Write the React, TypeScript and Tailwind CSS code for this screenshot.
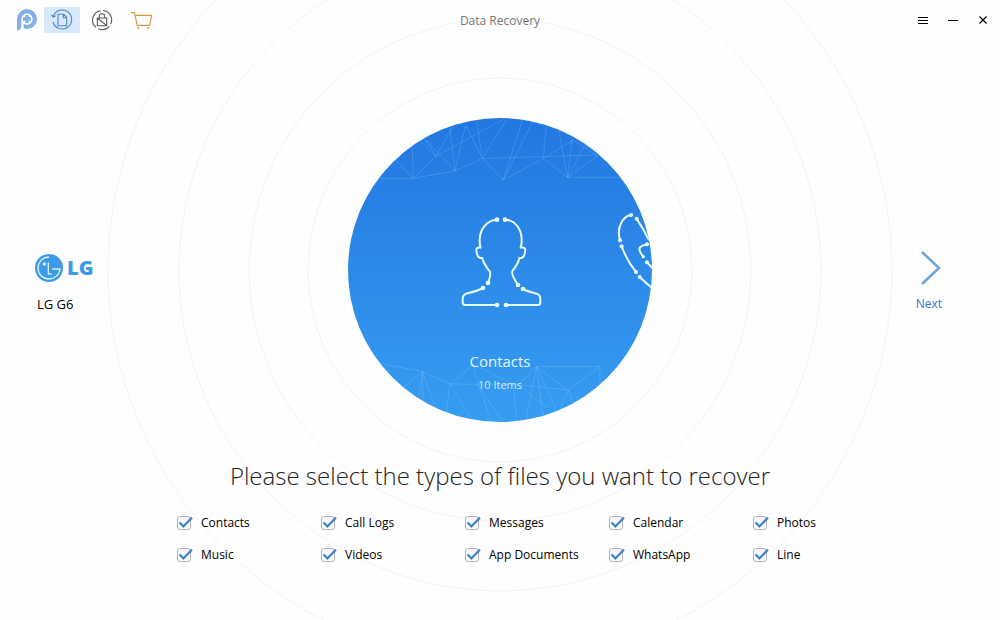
import { useState } from 'react'

const FILE_TYPES = [
  'Contacts',
  'Call Logs',
  'Messages',
  'Calendar',
  'Photos',
  'Music',
  'Videos',
  'App Documents',
  'WhatsApp',
  'Line',
]

const RING_RADII = [192, 251, 321, 392]

function AppLogo() {
  return (
    <svg width="22" height="22" viewBox="48 27 66 66" aria-hidden="true">
      <path fill="#84b0ea" d="M51 92V57a30 30 0 1 1 30 30q-5 0-10-2V71a17 17 0 1 0-7-14V79q0 11-13 13Z" />
      <path fill="#84b0ea" d="M76 45h10v7h7v10h-7v7H76v-7h-7V52h7Z" />
    </svg>
  )
}

function RecoverIcon() {
  return (
    <svg width="22" height="22" viewBox="153 27 66 66" fill="none" stroke="#4588cf" strokeWidth="3.2" aria-hidden="true">
      <path d="M160 48a28.500 28.500 0 1 1-1 18" />
      <path d="M154 45l6 6 7-4" />
      <path d="M174 43h17l9 9v25h-26ZM190 43v10h10" />
    </svg>
  )
}

function UnlockIcon() {
  return (
    <svg width="22" height="22" viewBox="273 27 66 66" fill="none" stroke="#555" strokeWidth="3.2" aria-hidden="true">
      <path d="M288 82a28.500 28.500 0 0 1 14-50M309 31.500a28.500 28.500 0 0 1 23 41M328 79a28.500 28.500 0 0 1-33 7" />
      <path d="M292 54h28v23h-28ZM298 54v-5a8 8 0 0 1 16 0v5M292 54l28 23" />
    </svg>
  )
}

function CartIcon() {
  return (
    <svg width="22" height="22" viewBox="393 27 66 66" fill="none" stroke="#dc9440" strokeWidth="3.4" aria-hidden="true">
      <path d="M393 38h10l9 38h37l6-30h-50" strokeLinejoin="round" />
      <circle cx="415" cy="84" r="3" fill="#dc9440" stroke="none" />
      <circle cx="445" cy="84" r="3" fill="#dc9440" stroke="none" />
    </svg>
  )
}

function TitleBar() {
  return (
    <header className="relative grid h-10 grid-cols-[1fr_auto_1fr] items-center">
      <div className="flex items-center pl-4">
        <AppLogo />
        <nav className="ml-[6px] flex gap-1">
          <button type="button" aria-label="Recover" className="flex h-[26px] w-9 items-center justify-center rounded-xs bg-[#d9e8fa]">
            <RecoverIcon />
          </button>
          <button type="button" aria-label="Unlock" className="flex h-[26px] w-9 items-center justify-center">
            <UnlockIcon />
          </button>
          <button type="button" aria-label="Buy" className="flex h-[26px] w-9 items-center justify-center">
            <CartIcon />
          </button>
        </nav>
      </div>
      <h1 className="pt-[2px] text-xs text-[#777]">Data Recovery</h1>
      <div className="flex justify-end pr-[2px] text-black">
        <button type="button" aria-label="Menu" className="flex h-6 w-[30px] items-center justify-center">
          <svg width="10" height="7" viewBox="0 0 10 7" fill="currentColor" shapeRendering="crispEdges">
            <path d="M0 0h10v1H0ZM0 3h10v1H0ZM0 6h10v1H0Z" />
          </svg>
        </button>
        <button type="button" aria-label="Minimize" className="flex h-6 w-[30px] items-center justify-center">
          <svg width="10" height="2" viewBox="0 0 10 2" fill="currentColor" shapeRendering="crispEdges">
            <path d="M0 1h10v1H0Z" />
          </svg>
        </button>
        <button type="button" aria-label="Close" className="flex h-6 w-[30px] items-center justify-center">
          <svg width="8" height="8" viewBox="0 0 8 8" fill="none" stroke="currentColor" strokeWidth="1.300">
            <path d="M0.500 0.500l7 7M7.500 0.500l-7 7" />
          </svg>
        </button>
      </div>
    </header>
  )
}

function Rings() {
  return (
    <svg
      className="pointer-events-none absolute top-1/2 left-1/2 -translate-x-1/2 -translate-y-1/2"
      width="800"
      height="800"
      viewBox="-400 -400 800 800"
      fill="none"
      stroke="#f3f3f3"
      aria-hidden="true"
    >
      {RING_RADII.map(r => (
        <circle key={r} r={r} />
      ))}
    </svg>
  )
}

function DiscArt() {
  return (
    <svg className="absolute inset-0" width="304" height="304" viewBox="0 0 304 304" fill="none" aria-hidden="true">
      <defs>
        <linearGradient id="disc-fill" x1="0" y1="0" x2="0" y2="1">
          <stop offset="0" stopColor="#2277e0" />
          <stop offset="1" stopColor="#369df1" />
        </linearGradient>
        <clipPath id="disc-clip">
          <circle cx="152" cy="152" r="152" />
        </clipPath>
      </defs>
      <circle cx="152" cy="152" r="152" fill="url(#disc-fill)" />
      <g clipPath="url(#disc-clip)">
        {/* mesh along the top edge */}
        <g transform="translate(-3 -3) scale(0.33333)" stroke="#8ccbff" strokeOpacity="0.250" strokeWidth="3">
          <path d="M90 190H205L330 168L412 130L595 125L755 120M668 187H830M412 130L475 195L595 130L668 187" />
          <path d="M150 132L205 190L202 100M205 190L272 124L480 10M225 78L272 124L242 75M242 75L330 168L315 40M272 124L335 15" />
          <path d="M330 168L362 30L412 130L395 15M412 130L490 5M475 195L532 15M475 195L565 15M595 130L605 20M595 130L685 75" />
          <path d="M668 187L640 40M668 187L682 70M668 187L725 80M668 187L760 120M685 75L760 125" />
        </g>
        {/* mesh along the bottom edge */}
        <g transform="translate(-3 222) scale(0.33333)" stroke="#a5d8ff" strokeOpacity="0.220" strokeWidth="3">
          <path d="M90 68L232 94L315 132L520 134L670 150L765 80H575L520 134M315 132L385 75L480 120M385 75L400 135" />
          <path d="M232 94L150 165M232 94L218 190M232 94L235 200M232 94L275 215M315 132L300 240M315 132L385 245" />
          <path d="M400 135L440 250M400 135L475 250M505 132L515 250M575 80L540 250M575 80L595 240M575 80L635 215M575 80L670 150" />
          <path d="M520 134L610 205M670 150L640 220M670 150L690 200M765 80V140" />
        </g>
        {/* head and shoulders */}
        <g transform="translate(92 82) scale(0.33333)" stroke="#e9fdff" strokeWidth="6" strokeLinecap="round" strokeLinejoin="round">
          <path d="M171 59C138 60 118 92 119 122Q119 134 122 143Q109 141 109 150Q111 172 121 174H127Q129 189 149 214Q154 223 144 249" />
          <path d="M195 59C228 60 246 92 245 122Q245 134 242 143Q256 141 256 150Q254 172 244 174H238Q236 189 218 212Q211 220 234 255" />
          <path d="M129 264Q112 273 82 280Q68 284 68 296V308Q68 315 76 315H171" />
          <path d="M249 267Q262 274 290 281Q301 285 301 296V308Q301 315 293 315H198" />
          <g fill="#e9fdff" stroke="none">
            <circle cx="171" cy="59" r="7" />
            <circle cx="195" cy="59" r="7" />
            <circle cx="144" cy="249" r="7" />
            <circle cx="234" cy="255" r="7" />
            <circle cx="129" cy="264" r="7" />
            <circle cx="249" cy="267" r="7" />
            <circle cx="171" cy="315" r="7" />
            <circle cx="198" cy="315" r="7" />
          </g>
        </g>
        {/* handset of the following slide, cut by the disc edge */}
        <g transform="translate(252 82) scale(0.33333)" stroke="#e9fdff" strokeWidth="6" strokeLinecap="round" strokeLinejoin="round">
          <path d="M93 45C68 49 49 82 60 121M65 139Q80 181 108 216M119 231Q137 248 157 265" />
          <path d="M110 56Q128 83 146 119M141 133Q114 139 119 151Q121 160 130 170M141 187L160 208" />
          <g fill="#e9fdff" stroke="none">
            <circle cx="93" cy="45" r="6" />
            <circle cx="60" cy="121" r="6" />
            <circle cx="65" cy="139" r="6" />
            <circle cx="108" cy="216" r="6" />
            <circle cx="119" cy="231" r="6" />
            <circle cx="110" cy="56" r="6" />
            <circle cx="141" cy="133" r="6" />
            <circle cx="130" cy="170" r="5" />
            <circle cx="141" cy="187" r="6" />
          </g>
        </g>
      </g>
    </svg>
  )
}

function Device() {
  return (
    <div className="justify-self-start pt-7 pl-[35px]">
      <div className="flex h-7 items-center gap-1">
        <svg width="28" height="28" viewBox="0 0 84 84" fill="none" aria-hidden="true">
          <circle cx="42" cy="42" r="42" fill="#3b9be8" />
          <path d="M42 9A33 33 0 1 0 75 45H52" stroke="#d8f1ff" strokeWidth="4" />
          <path d="M40 26V60H50" stroke="#d8f1ff" strokeWidth="4" />
          <circle cx="28" cy="30" r="5" fill="#d8f1ff" />
        </svg>
        <span className="text-xl leading-7 font-extrabold text-[#3b9be8]">LG</span>
      </div>
      <p className="mt-3 pl-[2px] text-[13px] leading-5 text-black">LG G6</p>
    </div>
  )
}

function NextButton() {
  return (
    <div className="justify-self-end pt-6 pr-[58px]">
      <button type="button" className="flex flex-col items-center text-xs leading-5 text-[#3379bd]">
        <svg className="ml-1" width="22" height="36" viewBox="0 0 22 36" fill="none" stroke="#6fa3dc" strokeWidth="2.500" aria-hidden="true">
          <path d="M2 2L19 18L2 34" />
        </svg>
        <span className="mt-2">Next</span>
      </button>
    </div>
  )
}

function TypeCheckbox({ label }: { label: string }) {
  const [checked, setChecked] = useState(true)

  return (
    <label className="relative flex h-5 items-center gap-[10px] text-xs whitespace-nowrap text-black">
      <input
        type="checkbox"
        checked={checked}
        onChange={e => setChecked(e.target.checked)}
        className="peer h-[14px] w-[14px] appearance-none rounded-[3px] border border-[#b3b2b8] bg-[#f3fbff]"
      />
      {/* the tick runs past the corner of the box */}
      <svg
        className="pointer-events-none absolute top-[3px] left-0 hidden peer-checked:block"
        width="17"
        height="14"
        viewBox="0 0 17 14"
        fill="none"
        stroke="#3f7fcf"
        strokeWidth="2.200"
        aria-hidden="true"
      >
        <path d="M2.500 6.500L6.500 10.500L15 1.500" />
      </svg>
      {label}
    </label>
  )
}

export default function App() {
  return (
    <div className="relative min-h-screen overflow-hidden bg-[#fefefe] font-['Open_Sans','Noto_Sans',sans-serif]">
      <div className="relative z-10">
        <TitleBar />
      </div>

      <main>
        <div className="grid grid-cols-[1fr_304px_1fr] items-center pt-[78px]">
          <Device />
          <section className="relative h-[304px]">
            <Rings />
            <DiscArt />
            <div className="relative flex h-full flex-col items-center justify-end pb-[27px] text-[#e0f7ff]">
              <h2 className="text-[15px] leading-6">Contacts</h2>
              <p className="mt-[2px] text-[11px] leading-5 text-[#c9ebfd]">10 Items</p>
            </div>
          </section>
          <NextButton />
        </div>

        <section className="relative">
          <h2 className="mt-[34px] text-center text-2xl leading-10 font-light text-[#222]">
            Please select the types of files you want to recover
          </h2>
          <div className="mt-[17px] grid grid-cols-[repeat(4,144px)_70px] justify-center gap-y-3">
            {FILE_TYPES.map(name => (
              <TypeCheckbox key={name} label={name} />
            ))}
          </div>
        </section>
      </main>
    </div>
  )
}
